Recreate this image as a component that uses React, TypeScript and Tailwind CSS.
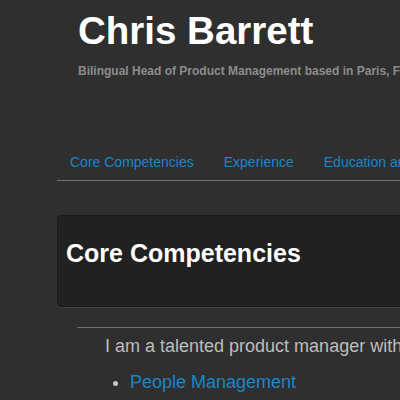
import React from "react";

export default function App() {
  const font = { fontFamily: '"Liberation Sans", Arial, sans-serif' };
  return (
    <div className="w-[400px] h-[400px] overflow-hidden bg-[#2f2f2f]" style={font}>
      <div className="ml-[57px] w-[900px]">
        <header className="pl-[21px] pt-[12px]">
          <h1 className="text-[38.5px] leading-[38px] font-bold text-white m-0 whitespace-nowrap">Chris Barrett</h1>
          <p className="mt-[15px] text-[12px] leading-[12px] font-bold text-[#8c8c8c] whitespace-nowrap">
            Bilingual Head of Product Management based in Paris, France
          </p>
        </header>
        <nav className="mt-[78px] border-b border-[#717171]">
          <ul className="flex gap-[30px] pl-[13px] pb-[11px] text-[14px] leading-[14px] text-[#1a85c8] whitespace-nowrap">
            <li><a>Core Competencies</a></li>
            <li><a>Experience</a></li>
            <li><a>Education and Skills</a></li>
          </ul>
        </nav>
        <section className="mt-[34px] bg-[#212121] border border-[#1a1a1a] rounded-[4px] shadow-[0_1px_0_rgba(255,255,255,0.08)] pl-[8px] pt-[25px] pb-[40px]">
          <h2 className="text-[25px] leading-[25px] font-bold text-white whitespace-nowrap">Core Competencies</h2>
        </section>
        <div className="ml-[20px] mt-[20px] border-t border-[#717171]"></div>
        <p className="ml-[48px] mt-[9px] text-[18px] leading-[18px] text-[#bdbdbd] whitespace-nowrap">
          I am a talented product manager with over ten years of experience
        </p>
        <ul className="ml-[56px] mt-[18px] text-[18px] leading-[18px]">
          <li className="flex items-center whitespace-nowrap">
            <span className="w-[5px] h-[5px] rounded-full bg-[#c8c8c8] mr-[12px] mt-[2px]"></span>
            <a className="text-[#1a85c8]">People Management</a>
          </li>
        </ul>
      </div>
    </div>
  );
}
